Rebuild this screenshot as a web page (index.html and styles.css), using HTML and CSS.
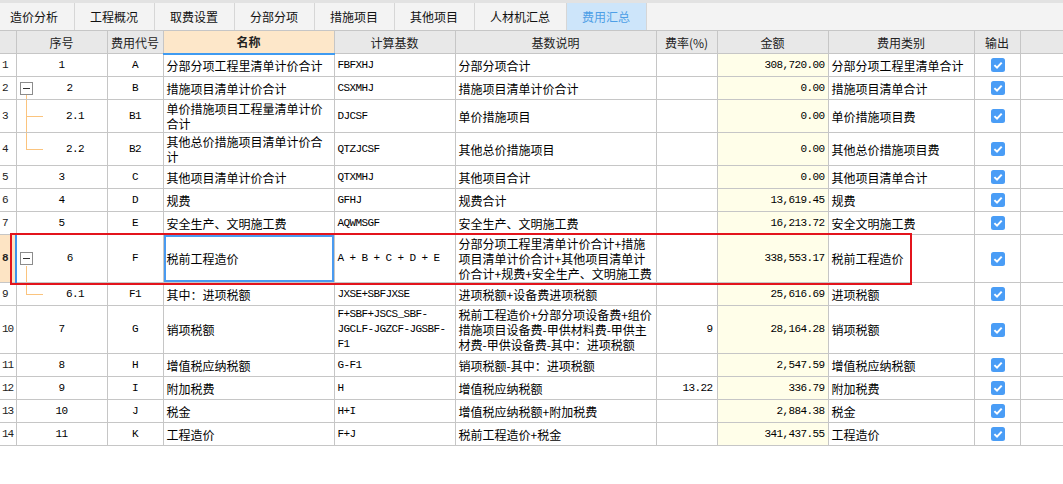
FILE: index.html
```html
<!DOCTYPE html>
<html lang="zh-CN">
<head>
<meta charset="utf-8">
<title>费用汇总</title>
<link rel="stylesheet" href="styles.css">
</head>
<body>
<div class="app">
  <div class="tabbar">
    <div class="tab first">造价分析</div>
    <div class="tab">工程概况</div>
    <div class="tab">取费设置</div>
    <div class="tab">分部分项</div>
    <div class="tab">措施项目</div>
    <div class="tab">其他项目</div>
    <div class="tab">人材机汇总</div>
    <div class="tab active">费用汇总</div>
  </div>
  <table class="grid">
    <colgroup>
      <col class="c-rn"><col class="c-seq"><col class="c-code"><col class="c-name"><col class="c-base"><col class="c-desc"><col class="c-rate"><col class="c-amt"><col class="c-type"><col class="c-out"><col class="c-rest">
    </colgroup>
    <thead>
      <tr>
        <th></th><th>序号</th><th>费用代号</th><th class="sel">名称</th><th>计算基数</th><th>基数说明</th><th>费率(%)</th><th>金额</th><th>费用类别</th><th>输出</th><th></th>
      </tr>
    </thead>
    <tbody>
      <tr>
        <td class="rn">1</td><td class="seq mono">1</td><td class="code mono">A</td><td class="txt">分部分项工程里清单计价合计</td><td class="mono">FBFXHJ</td><td class="txt">分部分项合计</td><td class="rate mono"></td><td class="amt mono">308,720.00</td><td class="txt">分部分项工程里清单合计</td>
        <td class="out"><svg class="chk" viewBox="0 0 14 14"><rect width="14" height="14" rx="2.5" fill="#4a9df6"/><path d="M3.4 7.1 6 9.6 10.7 4.6" stroke="#fff" stroke-width="2" fill="none"/></svg></td><td></td>
      </tr>
      <tr>
        <td class="rn">2</td><td class="seq mono parent"><div class="tree"><span class="toggle"></span><span class="num">2</span></div></td><td class="code mono">B</td><td class="txt">措施项目清单计价合计</td><td class="mono">CSXMHJ</td><td class="txt">措施项目清单计价合计</td><td class="rate mono"></td><td class="amt mono">0.00</td><td class="txt">措施项目清单合计</td>
        <td class="out"><svg class="chk" viewBox="0 0 14 14"><rect width="14" height="14" rx="2.5" fill="#4a9df6"/><path d="M3.4 7.1 6 9.6 10.7 4.6" stroke="#fff" stroke-width="2" fill="none"/></svg></td><td></td>
      </tr>
      <tr>
        <td class="rn">3</td><td class="seq mono child"><div class="tree"><span class="stub"></span><span class="num">2.1</span></div></td><td class="code mono">B1</td><td class="txt">单价措施项目工程量清单计价<br>合计</td><td class="mono">DJCSF</td><td class="txt">单价措施项目</td><td class="rate mono"></td><td class="amt mono">0.00</td><td class="txt">单价措施项目费</td>
        <td class="out"><svg class="chk" viewBox="0 0 14 14"><rect width="14" height="14" rx="2.5" fill="#4a9df6"/><path d="M3.4 7.1 6 9.6 10.7 4.6" stroke="#fff" stroke-width="2" fill="none"/></svg></td><td></td>
      </tr>
      <tr>
        <td class="rn">4</td><td class="seq mono child last"><div class="tree"><span class="stub"></span><span class="num">2.2</span></div></td><td class="code mono">B2</td><td class="txt">其他总价措施项目清单计价合<br>计</td><td class="mono">QTZJCSF</td><td class="txt">其他总价措施项目</td><td class="rate mono"></td><td class="amt mono">0.00</td><td class="txt">其他总价措施项目费</td>
        <td class="out"><svg class="chk" viewBox="0 0 14 14"><rect width="14" height="14" rx="2.5" fill="#4a9df6"/><path d="M3.4 7.1 6 9.6 10.7 4.6" stroke="#fff" stroke-width="2" fill="none"/></svg></td><td></td>
      </tr>
      <tr>
        <td class="rn">5</td><td class="seq mono">3</td><td class="code mono">C</td><td class="txt">其他项目清单计价合计</td><td class="mono">QTXMHJ</td><td class="txt">其他项目合计</td><td class="rate mono"></td><td class="amt mono">0.00</td><td class="txt">其他项目清单合计</td>
        <td class="out"><svg class="chk" viewBox="0 0 14 14"><rect width="14" height="14" rx="2.5" fill="#4a9df6"/><path d="M3.4 7.1 6 9.6 10.7 4.6" stroke="#fff" stroke-width="2" fill="none"/></svg></td><td></td>
      </tr>
      <tr>
        <td class="rn">6</td><td class="seq mono">4</td><td class="code mono">D</td><td class="txt">规费</td><td class="mono">GFHJ</td><td class="txt">规费合计</td><td class="rate mono"></td><td class="amt mono">13,619.45</td><td class="txt">规费</td>
        <td class="out"><svg class="chk" viewBox="0 0 14 14"><rect width="14" height="14" rx="2.5" fill="#4a9df6"/><path d="M3.4 7.1 6 9.6 10.7 4.6" stroke="#fff" stroke-width="2" fill="none"/></svg></td><td></td>
      </tr>
      <tr>
        <td class="rn">7</td><td class="seq mono">5</td><td class="code mono">E</td><td class="txt">安全生产、文明施工费</td><td class="mono">AQWMSGF</td><td class="txt">安全生产、文明施工费</td><td class="rate mono"></td><td class="amt mono">16,213.72</td><td class="txt">安全文明施工费</td>
        <td class="out"><svg class="chk" viewBox="0 0 14 14"><rect width="14" height="14" rx="2.5" fill="#4a9df6"/><path d="M3.4 7.1 6 9.6 10.7 4.6" stroke="#fff" stroke-width="2" fill="none"/></svg></td><td></td>
      </tr>
      <tr class="current">
        <td class="rn cur">8</td><td class="seq mono parent curseq"><div class="tree"><span class="toggle"></span><span class="num">6</span></div></td><td class="code mono">F</td><td class="txt focus">税前工程造价</td><td class="mono">A + B + C + D + E</td><td class="txt">分部分项工程里清单计价合计+措施<br>项目清单计价合计+其他项目清单计<br>价合计+规费+安全生产、文明施工费</td><td class="rate mono"></td><td class="amt mono">338,553.17</td><td class="txt">税前工程造价</td>
        <td class="out"><svg class="chk" viewBox="0 0 14 14"><rect width="14" height="14" rx="2.5" fill="#4a9df6"/><path d="M3.4 7.1 6 9.6 10.7 4.6" stroke="#fff" stroke-width="2" fill="none"/></svg></td><td></td>
      </tr>
      <tr>
        <td class="rn">9</td><td class="seq mono child last"><div class="tree"><span class="stub"></span><span class="num">6.1</span></div></td><td class="code mono">F1</td><td class="txt">其中：进项税额</td><td class="mono">JXSE+SBFJXSE</td><td class="txt">进项税额+设备费进项税额</td><td class="rate mono"></td><td class="amt mono">25,616.69</td><td class="txt">进项税额</td>
        <td class="out"><svg class="chk" viewBox="0 0 14 14"><rect width="14" height="14" rx="2.5" fill="#4a9df6"/><path d="M3.4 7.1 6 9.6 10.7 4.6" stroke="#fff" stroke-width="2" fill="none"/></svg></td><td></td>
      </tr>
      <tr>
        <td class="rn">10</td><td class="seq mono">7</td><td class="code mono">G</td><td class="txt">销项税额</td><td class="mono">F+SBF+JSCS_SBF-<br>JGCLF-JGZCF-JGSBF-<br>F1</td><td class="txt">税前工程造价+分部分项设备费+组价<br>措施项目设备费-甲供材料费-甲供主<br>材费-甲供设备费-其中：进项税额</td><td class="rate mono">9</td><td class="amt mono">28,164.28</td><td class="txt">销项税额</td>
        <td class="out"><svg class="chk" viewBox="0 0 14 14"><rect width="14" height="14" rx="2.5" fill="#4a9df6"/><path d="M3.4 7.1 6 9.6 10.7 4.6" stroke="#fff" stroke-width="2" fill="none"/></svg></td><td></td>
      </tr>
      <tr>
        <td class="rn">11</td><td class="seq mono">8</td><td class="code mono">H</td><td class="txt">增值税应纳税额</td><td class="mono">G-F1</td><td class="txt">销项税额-其中：进项税额</td><td class="rate mono"></td><td class="amt mono">2,547.59</td><td class="txt">增值税应纳税额</td>
        <td class="out"><svg class="chk" viewBox="0 0 14 14"><rect width="14" height="14" rx="2.5" fill="#4a9df6"/><path d="M3.4 7.1 6 9.6 10.7 4.6" stroke="#fff" stroke-width="2" fill="none"/></svg></td><td></td>
      </tr>
      <tr>
        <td class="rn">12</td><td class="seq mono">9</td><td class="code mono">I</td><td class="txt">附加税费</td><td class="mono">H</td><td class="txt">增值税应纳税额</td><td class="rate mono">13.22</td><td class="amt mono">336.79</td><td class="txt">附加税费</td>
        <td class="out"><svg class="chk" viewBox="0 0 14 14"><rect width="14" height="14" rx="2.5" fill="#4a9df6"/><path d="M3.4 7.1 6 9.6 10.7 4.6" stroke="#fff" stroke-width="2" fill="none"/></svg></td><td></td>
      </tr>
      <tr>
        <td class="rn">13</td><td class="seq mono">10</td><td class="code mono">J</td><td class="txt">税金</td><td class="mono">H+I</td><td class="txt">增值税应纳税额+附加税费</td><td class="rate mono"></td><td class="amt mono">2,884.38</td><td class="txt">税金</td>
        <td class="out"><svg class="chk" viewBox="0 0 14 14"><rect width="14" height="14" rx="2.5" fill="#4a9df6"/><path d="M3.4 7.1 6 9.6 10.7 4.6" stroke="#fff" stroke-width="2" fill="none"/></svg></td><td></td>
      </tr>
      <tr>
        <td class="rn">14</td><td class="seq mono">11</td><td class="code mono">K</td><td class="txt">工程造价</td><td class="mono">F+J</td><td class="txt">税前工程造价+税金</td><td class="rate mono"></td><td class="amt mono">341,437.55</td><td class="txt">工程造价</td>
        <td class="out"><svg class="chk" viewBox="0 0 14 14"><rect width="14" height="14" rx="2.5" fill="#4a9df6"/><path d="M3.4 7.1 6 9.6 10.7 4.6" stroke="#fff" stroke-width="2" fill="none"/></svg></td><td></td>
      </tr>
    </tbody>
  </table>
  <div class="mark"></div>
</div>
</body>
</html>
```
FILE: styles.css
```css
* { box-sizing: border-box; }
html, body { margin: 0; padding: 0; background: #fff; }
body {
  width: 1063px;
  height: 484px;
  overflow: hidden;
  font-family: "Noto Sans CJK SC", "Noto Sans", sans-serif;
  font-size: 12px;
  color: #000;
}
.app { position: relative; width: 1063px; height: 484px; }

/* tabs */
.tabbar {
  display: flex;
  height: 30px;
  background: #f3f3f3;
  border-top: 3px solid #e2e2e2;
}
.tab {
  display: flex;
  align-items: center;
  padding: 0 16px 0 15px;
  border-right: 1px solid #d6d6d6;
  color: #111;
  font-size: 12px;
  white-space: nowrap;
}
.tab.first { padding-left: 10px; }
.tab.active { background: #cde5fa; color: #4e9fe6; }

/* grid */
.grid {
  width: 1063px;
  table-layout: fixed;
  border-collapse: collapse;
}
.c-rn { width: 16px; }
.c-seq { width: 91px; }
.c-code { width: 56px; }
.c-name { width: 171px; }
.c-base { width: 121px; }
.c-desc { width: 201px; }
.c-rate { width: 61px; }
.c-amt { width: 111px; }
.c-type { width: 146px; }
.c-out { width: 46px; }
.c-rest { width: 43px; }

.grid th, .grid td {
  border: 1px solid #c6c6c6;
  line-height: 15px;
  vertical-align: middle;
  overflow: hidden;
}
.grid th:first-child, .grid td:first-child { border-left: none; }
.grid th:last-child, .grid td:last-child { border-right: none; }
.grid th {
  height: 23px;
  padding: 0 2px;
  background: #e8e8e8;
  font-weight: normal;
  color: #222;
  text-align: center;
  white-space: nowrap;
}
.grid th.sel {
  background: #fde7c9;
  font-weight: bold;
  border-bottom: 2px solid #3f9bf1;
}
.grid td {
  height: 23px;
  padding: 1px 3px 1px;
  text-align: left;
}
.mono {
  font-family: "Liberation Mono", "DejaVu Sans Mono", monospace;
  font-size: 11px;
  letter-spacing: -0.6px;
}
.grid td.rn {
  padding: 0 0 0 2px;
  font-family: "Liberation Mono", monospace;
  font-size: 11px;
  letter-spacing: -1px;
  color: #222;
}
.grid td.rn.cur { background: #fde4c4; font-weight: bold; }
.grid td.seq, .grid td.code { text-align: center; }
.grid td.rate, .grid td.amt { text-align: right; }
.grid td.rate { padding-right: 4px; }
.grid td.amt { background: #fffee9; padding-right: 3px; }
.grid td.out { text-align: center; padding: 0; }
.chk { width: 14px; height: 14px; display: block; margin: 0 auto; position: relative; left: 1px; }

/* tree column */
.grid td.seq.parent, .grid td.seq.child { position: relative; padding: 0; }
.tree { display: flex; align-items: center; }
.toggle {
  position: relative;
  flex: none;
  width: 13px;
  height: 13px;
  margin-left: 3px;
  border: 1px solid #8c8c8c;
  background: #fff;
}
.toggle::after {
  content: "";
  position: absolute;
  left: 2px;
  right: 2px;
  top: 5px;
  border-top: 1px solid #333;
}
.stub { flex: none; width: 27px; }
.num { flex: 1; text-align: center; }
.grid td.seq.parent::after {
  content: "";
  position: absolute;
  left: 9px;
  top: calc(50% + 7px);
  bottom: 0;
  border-left: 1px solid #fbc47e;
}
.grid td.seq.child::before {
  content: "";
  position: absolute;
  left: 9px;
  top: 0;
  bottom: 0;
  border-left: 1px solid #fbc47e;
}
.grid td.seq.child.last::before { bottom: auto; height: 50%; }
.grid td.seq.child::after {
  content: "";
  position: absolute;
  left: 9px;
  top: 50%;
  width: 17px;
  border-top: 1px solid #fbc47e;
}
.grid td.curseq { border-left: 2px solid #3d93ee; }
.grid td.focus { box-shadow: inset 0 0 0 2px #4a9af0; }

/* annotation rectangle */
.mark {
  position: absolute;
  left: 10px;
  top: 233px;
  width: 902px;
  height: 52px;
  border: 2px solid #e3141c;
  pointer-events: none;
}
```
